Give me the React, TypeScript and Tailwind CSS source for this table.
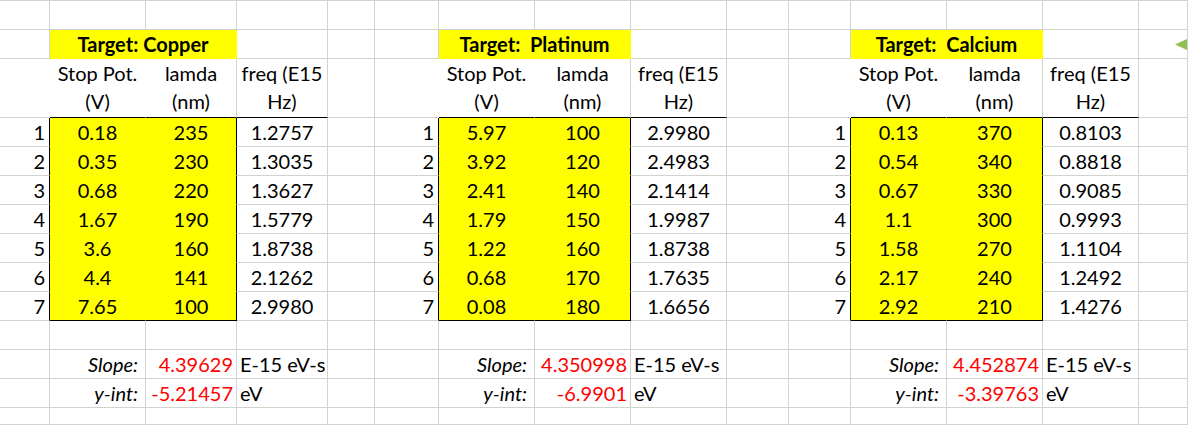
import type { ReactNode } from "react";

type Line = "g" | "k" | "n";

interface Table {
  name: string;
  rows: [string, string, string][];
  slope: string;
  yint: string;
}

const RIGHT: Record<Line, string> = {
  g: "border-r-[#cfd4cf]",
  k: "border-r-black",
  n: "border-r-transparent",
};
const BOTTOM: Record<Line, string> = {
  g: "border-b-[#cfd4cf]",
  k: "border-b-black",
  n: "border-b-transparent",
};

const tables: Table[] = [
  {
    name: "Target: Copper",
    rows: [
      ["0.18", "235", "1.2757"],
      ["0.35", "230", "1.3035"],
      ["0.68", "220", "1.3627"],
      ["1.67", "190", "1.5779"],
      ["3.6", "160", "1.8738"],
      ["4.4", "141", "2.1262"],
      ["7.65", "100", "2.9980"],
    ],
    slope: "4.39629",
    yint: "-5.21457",
  },
  {
    name: "Target:  Platinum",
    rows: [
      ["5.97", "100", "2.9980"],
      ["3.92", "120", "2.4983"],
      ["2.41", "140", "2.1414"],
      ["1.79", "150", "1.9987"],
      ["1.22", "160", "1.8738"],
      ["0.68", "170", "1.7635"],
      ["0.08", "180", "1.6656"],
    ],
    slope: "4.350998",
    yint: "-6.9901",
  },
  {
    name: "Target:  Calcium",
    rows: [
      ["0.13", "370", "0.8103"],
      ["0.54", "340", "0.8818"],
      ["0.67", "330", "0.9085"],
      ["1.1", "300", "0.9993"],
      ["1.58", "270", "1.1104"],
      ["2.17", "240", "1.2492"],
      ["2.92", "210", "1.4276"],
    ],
    slope: "4.452874",
    yint: "-3.39763",
  },
];

function Cell({
  children,
  r = "g",
  b = "g",
  className = "",
}: {
  children?: ReactNode;
  r?: Line;
  b?: Line;
  className?: string;
}) {
  return (
    <div
      className={`border-r border-b ${RIGHT[r]} ${BOTTOM[b]} whitespace-pre leading-[28px] ${className}`}
    >
      {children}
    </div>
  );
}

export default function App() {
  const renderRow = (row: number) =>
    tables.map((t, ti) => {
      const last = ti === tables.length - 1;
      const spacer =
        last && row === 1 ? (
          <Cell key={`${ti}-s`} className="flex items-start justify-end overflow-hidden pt-[9px]">
            <svg width="12" height="11" viewBox="0 0 12 11" className="shrink-0">
              <polygon points="0,5.5 12,0 12,11" fill="#92c050" />
            </svg>
          </Cell>
        ) : (
          <Cell key={`${ti}-s`} />
        );

      if (row === 1) {
        return [
          <Cell key={`${ti}-a`} />,
          <Cell
            key={`${ti}-b`}
            r="n"
            b="n"
            className="col-span-2 bg-[#ffff00] text-center font-bold"
          >
            {t.name}
          </Cell>,
          <Cell key={`${ti}-d`} />,
          spacer,
        ];
      }
      if (row === 2) {
        return [
          <Cell key={`${ti}-a`} r="n" />,
          <Cell key={`${ti}-b`} r="n" b="k" className="bg-white text-center">
            {"Stop Pot.\n(V)"}
          </Cell>,
          <Cell key={`${ti}-c`} b="k" className="bg-white text-center">
            {"lamda\n(nm)"}
          </Cell>,
          <Cell key={`${ti}-d`} b="k" className="text-center">
            {"freq (E15\nHz)"}
          </Cell>,
          spacer,
        ];
      }
      if (row >= 3 && row <= 9) {
        const i = row - 3;
        const d = t.rows[i];
        const bottom: Line = i === 6 ? "k" : "n";
        return [
          <Cell key={`${ti}-a`} r="k" className="pr-[4px] text-right">
            {i + 1}
          </Cell>,
          <Cell key={`${ti}-b`} r="n" b={bottom} className="bg-[#ffff00] text-center">
            {d[0]}
          </Cell>,
          <Cell key={`${ti}-c`} r="k" b={bottom} className="bg-[#ffff00] text-center">
            {d[1]}
          </Cell>,
          <Cell key={`${ti}-d`} className="text-center">
            {d[2]}
          </Cell>,
          spacer,
        ];
      }
      if (row === 11 || row === 12) {
        const slope = row === 11;
        return [
          <Cell key={`${ti}-a`} />,
          <Cell key={`${ti}-b`} className="pr-[7px] text-right italic">
            {slope ? "Slope:" : "y-int:"}
          </Cell>,
          <Cell key={`${ti}-c`} className="pr-[3px] text-right text-[#ff0000]">
            {slope ? t.slope : t.yint}
          </Cell>,
          <Cell key={`${ti}-d`} className="pl-[3px]">
            {slope ? "E-15 eV-s" : "eV"}
          </Cell>,
          spacer,
        ];
      }
      return [0, 1, 2, 3, 4].map((c) => <Cell key={`${ti}-${c}`} />);
    });

  return (
    <div className="h-[425px] w-[1188px] overflow-hidden bg-white font-[Lato,sans-serif] text-[20px] text-black">
      <div className="grid grid-cols-[50px_96px_91px_91px_47px_64px_96px_96px_96px_62px_62px_96px_96px_96px_49px] grid-rows-[29px_29px_59px_29px_29px_29px_29px_29px_29px_29px_29px_29px_29px_17px] border-t border-t-[#cfd4cf]">
        {Array.from({ length: 14 }).map((_, row) => renderRow(row))}
      </div>
    </div>
  );
}
